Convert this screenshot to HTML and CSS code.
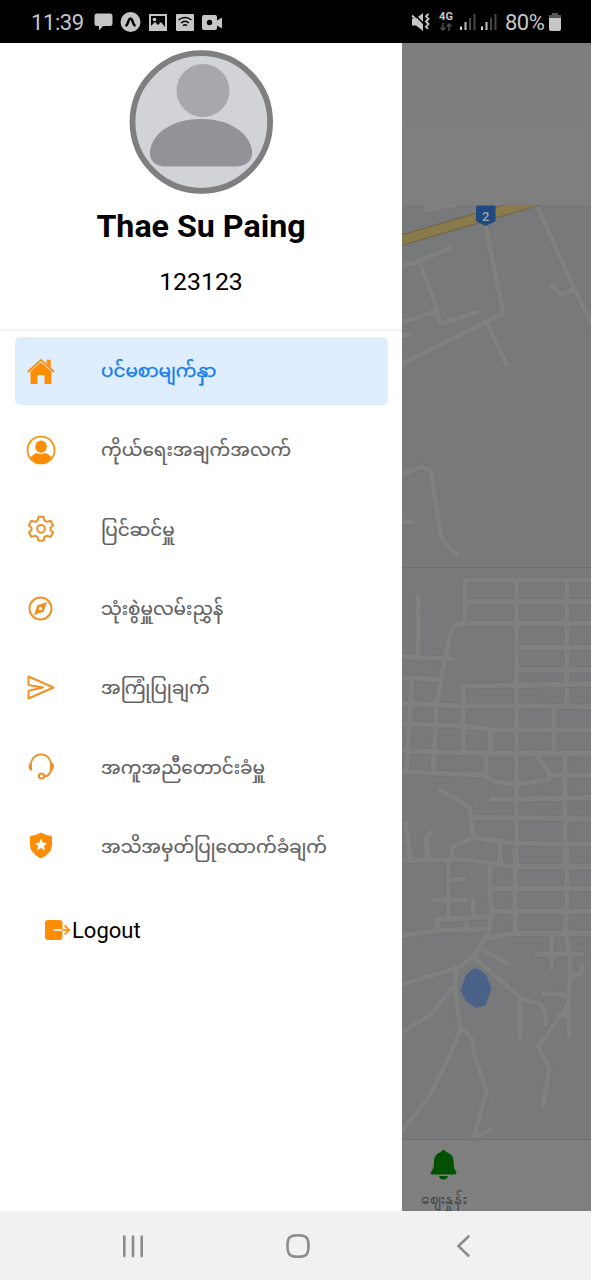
FILE: index.html
```html
<!DOCTYPE html>
<html lang="my">
<head>
<meta charset="utf-8">
<title>Menu</title>
<link rel="stylesheet" href="styles.css">
</head>
<body>
<div class="phone">
  <header class="status">
    <div class="status-left">
      <span class="clock">11:39</span>
      <svg class="status-icons" width="130" height="22" viewBox="0 0 130 22" fill="#c6c6c6">
        <path d="M3 2.500h13q2.500 0 2.500 2.500v8q0 2-2.500 2h-7l-4 4.500V15H3q-2.500 0-2.500-2V5q0-2.500 2.500-2.500z"/>
        <circle cx="36.500" cy="11" r="10"/>
        <path d="M31.500 15q2-1 3-5 2-5 4 0 1 4 3 5" fill="none" stroke="#000" stroke-width="2.500"/>
        <path d="M55 3h18v17H55z"/><path d="M57 5h14v11l-4-5-3 3-3-3-4 4z" fill="#000"/><circle cx="60.500" cy="8.500" r="1.800"/>
        <rect x="82" y="3" width="18" height="17" rx="1"/>
        <path d="M84.500 9q6.500-5 13 0M87 12q4-3.500 8 0M89 14.700q2-2 4 0" fill="none" stroke="#000" stroke-width="1.400"/><circle cx="91" cy="16.500" r="1"/>
        <path d="M110 4h11q2 0 2 2v3.500l5-3v11l-5-3V17q0 2-2 2h-11q-2 0-2-2V6q0-2 2-2z"/><circle cx="115.500" cy="11.500" r="2.700" fill="#000"/>
      </svg>
    </div>
    <div class="status-right">
      <svg width="19" height="20" viewBox="0 0 19 20" fill="#c6c6c6">
        <path d="M1 6.500h4l7-5.500v18l-7-5.500H1z"/><path d="M2 1l11 11" stroke="#000" stroke-width="1.700"/><path d="M1 3.500l10 10" stroke="#c6c6c6" stroke-width="1.800"/>
        <path d="M17.500 2l-2.500 2.300 2.500 2.600-2.500 2.600 2.500 2.600-2.500 2.600 2 2.300" fill="none" stroke="#c6c6c6" stroke-width="1.900"/>
      </svg>
      <div class="network"><span>4G</span>
        <svg width="12" height="8" viewBox="0 0 12 8" fill="none" stroke="#4c4c4c" stroke-width="1.500"><path d="M3 0v7M.500 4.500L3 7l2.500-2.500M9 8V1M6.500 3.500L9 1l2.500 2.500"/></svg>
      </div>
      <svg class="signals" width="37" height="18" viewBox="0 0 37 18" stroke-width="2">
        <path d="M1 13.500v3.500M22 13.500v3.500" stroke="#dedede"/><path d="M5.500 9v8M26.500 9v8" stroke="#bdbdbd"/><path d="M10 5v12M14.500 1v16M31 5v12M35.500 1v16" stroke="#474747"/>
      </svg>
      <span class="percent">80%</span>
      <svg class="battery" width="12" height="18" viewBox="0 0 12 18"><path d="M3 0h6v2h3v4H0V2h3z" fill="#555"/><path d="M0 5h12v11q0 2-2 2H2q-2 0-2-2z" fill="#c6c6c6"/></svg>
    </div>
  </header>

  <main class="screen">
    <aside class="drawer">
      <section class="profile">
        <svg width="144" height="144" viewBox="0 0 144 144">
          <circle cx="72.300" cy="72" r="68.800" fill="#d1d3d6" stroke="#7f7f7f" stroke-width="5.800"/>
          <circle cx="74" cy="40.500" r="26.500" fill="#a7a8ab"/>
          <path d="M21 101C23.500 82 44.500 69 72 69S120.500 82 123 101C124 111 117 116.500 105 116.500H37.500C26.500 116.500 20 111 21 101z" fill="#929397"/>
        </svg>
        <h1 class="name">Thae Su Paing</h1>
        <p class="number">123123</p>
      </section>
      <nav class="menu">
        <a class="item active">
          <svg class="icon" width="30" height="30" viewBox="0 0 30 30" fill="#fe8c05"><path d="M15 6.500L4.500 15.500V27q0 1 1 1h6v-8q0-1 1-1h5q1 0 1 1v8h6q1 0 1-1V15.500z"/><path d="M2.300 15.500L15 4l12.700 11.500" fill="none" stroke="#fe8c05" stroke-width="1.700" stroke-linecap="round"/><path d="M20.700 3.700h4v8l-4-4z"/></svg>
          <span>ပင်မစာမျက်နှာ</span></a>
        <a class="item">
          <svg class="icon" width="30" height="30" viewBox="0 0 30 30" fill="#fe8c05"><circle cx="15" cy="15" r="13.500" fill="none" stroke="#fe8c05" stroke-width="1.700"/><ellipse cx="15" cy="11.700" rx="5.800" ry="6.200"/><path d="M4.500 22.500Q7.500 18.500 11 18q4 2.600 8 0 3.500.500 6.500 4.500Q21 28.500 15 28.500T4.500 22.500z"/></svg>
          <span>ကိုယ်ရေးအချက်အလက်</span></a>
        <a class="item">
          <svg class="icon" width="30" height="30" viewBox="-.6 -.4 31.200 31.200" fill="none" stroke="#ef912a" stroke-width="2.100" stroke-linejoin="round"><circle cx="15" cy="15" r="4"/><path d="M12.500 2.500h5l1 3.800 2.500 1.500 3.900-1.200 2.700 4.800-2.700 2.400v2.400l2.700 2.400-2.700 4.800-3.900-1.200-2.500 1.500-1 3.800h-5l-1-3.800L9 22.200l-3.900 1.200-2.700-4.800 2.700-2.400v-2.400L2.400 11.400l2.700-4.800L9 7.800l2.500-1.500z"/></svg>
          <span>ပြင်ဆင်မှူ</span></a>
        <a class="item">
          <svg class="icon" width="30" height="30" viewBox="0 0 30 30"><circle cx="14.500" cy="14.500" r="11" fill="none" stroke="#ef912a" stroke-width="1.900"/><path fill-rule="evenodd" d="M21 8l-3.300 9.700L8 21l3.300-9.700zM14.600 12.900a1.700 1.700 0 1 0 .100 3.400 1.700 1.700 0 0 0-.100-3.400z" fill="#ef912a"/></svg>
          <span>သုံးစွဲမှူလမ်းညွှန်</span></a>
        <a class="item">
          <svg class="icon" width="30" height="30" viewBox="0 0 30 30" fill="none" stroke="#ef912a" stroke-width="2" stroke-linejoin="round"><path d="M2.500 3.500l25 11-25 11v-7q0-.800 1-1L17 14.500 3.500 12.200q-1-.200-1-1z"/></svg>
          <span>အကြုံပြုချက်</span></a>
        <a class="item">
          <svg class="icon" width="30" height="30" viewBox="0 0 30 30" fill="none" stroke="#ef912a" stroke-width="2"><path d="M5 10.500Q7.500 2.500 15 2.500t10 8v7.500Q23.500 24.500 18 24.500"/><path d="M5.500 10.500v8Q3 18 3 14.500t2.500-4zM25 10.500v8q2.500-.500 2.500-4t-2.500-4z" fill="#ef912a" stroke-width="1"/><circle cx="15.500" cy="24" r="2.600"/></svg>
          <span>အကူအညီတောင်းခံမှူ</span></a>
        <a class="item">
          <svg class="icon" width="30" height="30" viewBox="0 0 30 30" fill="#fe8c05"><path d="M15 1.500q5 3 9.500 3.300Q26 5 26 6.500V14q0 8-11 13.500Q4 22 4 14V6.500Q4 5 5.500 4.800 10 4.500 15 1.500z"/><path d="M15 7.500l1.900 4.200 4.300.400-3.300 3 1 4.400-3.900-2.400-3.900 2.400 1-4.400-3.300-3 4.300-.400z" fill="#fff"/></svg>
          <span>အသိအမှတ်ပြုထောက်ခံချက်</span></a>
      </nav>
      <div class="logout">
        <svg width="26" height="22" viewBox="0 0 26 22"><rect x="0" y="1" width="17.500" height="20" rx="3" fill="#fe8c05"/><path d="M8.500 11H17.500" stroke="#fff" stroke-width="1.600"/><path d="M17.500 11h7M19.500 6.500l4.900 4.500-4.900 4.500" fill="none" stroke="#fe9a26" stroke-width="1.800"/></svg>
        <span>Logout</span>
      </div>
    </aside>

    <section class="behind">
      <div class="app-header"></div>
      <div class="app-subheader"></div>
      <svg class="map" width="189" height="935" viewBox="402 205 189 935" fill="none" stroke-linejoin="round" stroke-linecap="round">
        <rect x="402" y="205" width="189" height="935" fill="#77797b"/>
        <defs>
          <g id="north" transform="translate(400 190) scale(.3333)">
            <path d="M75 60L170 42M80 60V42M98 48l30-8M0 230l60-18 90-38M60 220l45 120 15 62 110-35M0 397l22-5 88-28M0 525L250 400l60-30L258 115M262 400l58 125M412 50l110 245 60 120M525 295l-40 20-30-28M0 435h28M0 857l65-27 28 13 30 200 48 52M0 995h38"/>
          </g>
          <g id="center" transform="translate(400 560) scale(.3333)">
            <path d="M195 185V60h390M195 125h390M110 430L120 370 150 225q10-30 30-35h405M350 60V910M500 60V430M350 263h235M350 329h235M190 570V378L585 372M55 105v180M0 290l150 7M0 352l120 7M35 362L20 630M110 430l-10 200M0 430l180 7 405 3M0 492l180 4 100 14h305M0 572l270 8h315M462 440v130M272 515v60M0 635l250 10M258 580v65q15 20 30 20l55 8 105-14V645h140M405 580l45 60M495 590V910M275 717h75l235-5M120 690l88 50 12 92-65 30v40M210 772l375 5M220 832l110 17 255 4M18 790l12 108M80 900v-70l15-15M300 845v60"/>
          </g>
          <g id="south" transform="translate(400 850) scale(.3333)">
            <path d="M0 32l160-5q60 2 120 13l50 10h255M345 0V250M300 0V40M155 0V25M30 0V30M83 0V30M500 0V180L495 245 510 315V390l-5 80 3 90M285 115h300M285 184h300M270 40V120l5 70-10 60-45 70-50 35-170 50M145 30v170M150 88h45M105 150h90M220 150v55M112 235v-27l155-8M200 207v25M0 257l110-15 150-5M260 265l80-15h245M245 298l77 42M220 322l140 120v120M360 445l50 13q30 8 28 65M170 350l-5 55 15 125 35 35 10 55 35 105-40 140M225 860l45-18M160 412q-10 5-20 20-45 65-60 70L0 550M180 540q-10 40-95 205L0 850M455 260v95M410 313h135M545 345q10 30-30 33M430 430l70 5M500 470l-85 120 33 65-18 110M475 500l35-5"/>
          </g>
        </defs>
        <g stroke="#737577" stroke-width="20"><use href="#north"/><use href="#center"/><use href="#south"/></g>
        <g stroke="#7f8080" stroke-width="15.500"><use href="#north"/><use href="#center"/><use href="#south"/></g>
        <path d="M402 567.500H591M402 1139.500H591" stroke="#6f7071" stroke-width="1"/>
        <path d="M396 241.700L540 199.800" stroke="#6f6344" stroke-width="11"/>
        <path d="M396 241.700L540 199.800" stroke="#8a7a4c" stroke-width="9.200"/>
        <path d="M478 205.500h16q1.500 0 1.500 1.500v13q0 1.500-1.500 2l-8.300 4-8.300-4q-1.400-.500-1.400-2v-13q0-1.500 2-1.500z" fill="#204a7f"/>
        <text class="shield" x="485.700" y="220.500">2</text>
        <path d="M474 968l6 1.500 6.500 5.500 5 14-6 16-9 3-10-6-6-11.500 5.500-15.500z" fill="#4b6288"/>
      </svg>
      <div class="tab">
        <svg width="28" height="32" viewBox="0 0 28 32" fill="#005200"><path d="M13.500 1q2 0 2.500 2 7 1.500 7.500 9 .200 7 1.500 9 2 2 1.500 3-.500 1.500-2 1.500h-22Q.500 25.500.500 24 .500 23 2 21.500 4 19 4 12 4.500 4.500 11 3q.500-2 2.500-2zM9 27h9q-1 3.500-4.500 3.500T9 27z"/></svg>
        <span>ဈေးနှုန်း</span>
      </div>
    </section>
  </main>

  <footer class="navbar">
    <svg width="591" height="69" viewBox="0 0 591 69" fill="none" stroke="#8c8c8c" stroke-width="2.600" stroke-linecap="round"><path d="M124.300 25.500v19.500M133 25.500v19.500M141.700 25.500v19.500"/><path d="M298 24.200c8 0 10.500 2 10.500 10.800s-2.500 10.800-10.500 10.800-10.500-2-10.500-10.800 2.500-10.800 10.500-10.800z"/><path d="M468.500 25.500l-10 9.600 10 9.600"/></svg>
  </footer>
</div>
</body>
</html>
```
FILE: styles.css
```css
* { box-sizing: border-box; margin: 0; padding: 0; }
body { width: 591px; height: 1280px; overflow: hidden; background: #fff; font-family: Roboto, sans-serif; }
svg { display: block; flex: none; }
.phone { width: 591px; height: 1280px; display: flex; flex-direction: column; }
.status { height: 43px; background: #000; color: #c6c6c6; display: flex; justify-content: space-between; padding: 0 30px 0 31px; }
.status-left, .status-right { display: flex; align-items: center; }
.clock { font-size: 22px; width: 63px; letter-spacing: -0.4px; padding-top: 1px; }
.network { margin-left: 9px; width: 14px; display: flex; flex-direction: column; align-items: center; font-size: 11px; line-height: 10px; font-weight: 700; gap: 1px; }
.signals { margin-left: 7px; }
.percent { font-size: 22px; margin-left: 8px; width: 43px; letter-spacing: -0.5px; padding-top: 1px; }
.battery { margin-left: 1px; }
.screen { height: 1168px; display: flex; overflow: hidden; }
.drawer { width: 402px; background: #fff; }
.profile { height: 288px; padding-top: 7px; border-bottom: 2px solid #f2f2f2; display: flex; flex-direction: column; align-items: center; }
.name { font-size: 32.2px; line-height: 40px; font-weight: 700; color: #000; margin-top: 12px; white-space: nowrap; }
.number { font-size: 24.8px; line-height: 30px; color: #000; margin-top: 21px; }
.menu { padding: 5.500px 14px 0 15px; display: flex; flex-direction: column; gap: 11px; }
.item { height: 68.300px; border-radius: 5px; display: flex; align-items: center; padding-left: 10.500px; color: #606061; font-family: Roboto, "Noto Sans Myanmar", "Noto Sans", sans-serif; font-size: 18.4px; line-height: 40px; white-space: nowrap; -webkit-text-stroke: 0.2px #606061; }
.item span { margin-left: 45.500px; padding-top: 1px; }
.active { background: #dfeefe; color: #157cec; -webkit-text-stroke: 0.35px #157cec; }
.logout { display: flex; align-items: center; height: 30px; margin: 34px 0 0 45px; color: #000; font-size: 22px; }
.logout span { margin-left: 1px; padding-top: 1px; }
.behind { width: 189px; background: #7f7f7f; }
.app-header { height: 82px; background: #7e7e7e; border-bottom: 1px solid #7b7b7b; }
.app-subheader { height: 80px; background: #7f7f7f; }
.shield { font: 500 13px Roboto, sans-serif; fill: #9aa6b5; stroke: none; text-anchor: middle; }
.tab { height: 71px; width: 83px; padding-top: 9px; display: flex; flex-direction: column; align-items: center; color: #404040; font-size: 15.5px; line-height: 20px; white-space: nowrap; -webkit-text-stroke: 0.2px #404040; }
.tab span { margin-top: 8px; }
.navbar { height: 69px; background: #f1f1f1; }
```
